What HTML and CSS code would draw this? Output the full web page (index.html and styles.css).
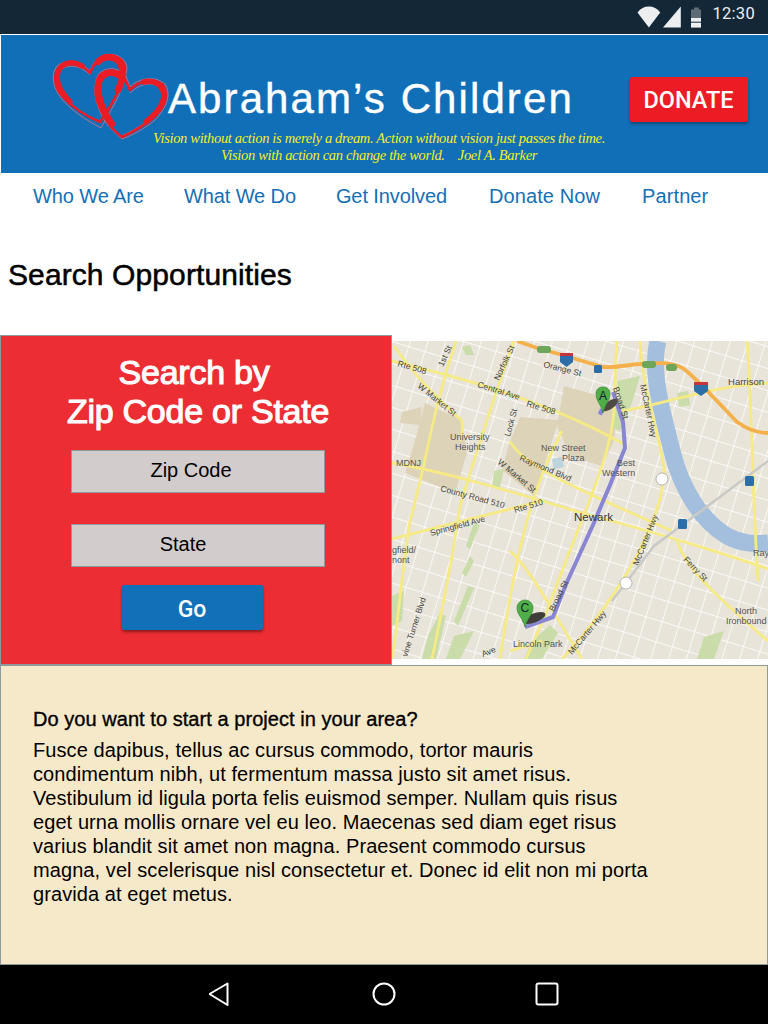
FILE: index.html
```html
<!DOCTYPE html>
<html lang="en">
<head>
<meta charset="utf-8">
<title>Search Opportunities</title>
<link rel="stylesheet" href="styles.css">
</head>
<body>
<div class="status">
  <svg class="st-wifi" width="24" height="22" viewBox="0 0 24 22"><path d="M0.500 6.500C3.500 2.500 7.500 0.500 12 0.500S20.500 2.500 23.500 6.500L12 21.500Z" fill="#eceeef"/></svg>
  <svg class="st-signal" width="18" height="22" viewBox="0 0 18 22"><path d="M18 0.500V21.500H0Z" fill="#eceeef"/></svg>
  <svg class="st-batt" width="11" height="21" viewBox="0 0 11 21"><path d="M3 0.500H8V2.500H11V20.500H0V2.500H3Z" fill="#5d6b76"/><path d="M0 11H11V20.500H0Z M0 14.500V16H11V14.500Z" fill="#eceeef" fill-rule="evenodd"/></svg>
  <span class="st-time">12:30</span>
</div>
<header class="head">
  <svg class="logo" width="116" height="92" viewBox="0 0 116 92" fill="none">
    <g stroke="#d9758a" stroke-width=".8" stroke-linejoin="round">
      <path d="M38 19C29 9 13 7 5 14C-1 22 0 34 9 46C20 59 34 68 49 76C58 60 72 38 75 17C75 6 63 0 52 3C45 6 40 12 38 19Z"/>
      <path d="M78 35C88 25 104 24 113 32C119 42 116 54 103 68C92 77 81 83 70 87C62 80 54 72 50 64C43 50 40 36 46 23C52 15 66 14 74 24Z"/>
      <path d="M38 23C29 13 15 12 8 18C2 27 4 36 12 45C22 56 36 64 49 71"/>
      <path d="M78 41C88 31 102 29 110 36C114 44 112 54 100 65C90 73 81 79 71 83"/>
    </g>
    <g stroke="#ec1c24" stroke-linejoin="round" stroke-linecap="round">
      <path d="M38 21C31 12 15 8 7 15C1 23 2 35 11 45C21 56 34 64 48 70C57 58 70 36 73 17C73 7 62 1 52 4C45 7 41 13 38 21Z" stroke-width="2.600"/>
      <path d="M78 38C87 28 103 26 111 33C117 42 114 54 101 66C91 74 81 80 70 85C60 78 55 70 51 62C44 50 41 36 47 24C53 17 66 17 72 25Z" stroke-width="2.600"/>
      <path d="M30 14C20 8 9 11 6 20C3 30 8 39 18 50" stroke-width="5.500"/>
      <path d="M46 10C52 3 63 4 68 11C72 18 71 28 66 38" stroke-width="6.500"/>
      <path d="M68 24C60 18 51 20 47 30C44 42 50 58 60 72" stroke-width="6.500"/>
      <path d="M92 30C102 27 111 33 112 43C112 53 105 61 94 70" stroke-width="5.500"/>
    </g>
  </svg>
  <div class="brand">
    <h1 class="brand-name">Abraham’s Children</h1>
    <p class="brand-tag">Vision without action is merely a dream. Action without vision just passes the time.<br>Vision with action can change the world. &nbsp;&nbsp; Joel A. Barker</p>
  </div>
  <a class="donate">DONATE</a>
</header>
<nav class="nav">
  <a>Who We Are</a><a>What We Do</a><a>Get Involved</a><a class="nav-wide">Donate Now</a><a class="nav-wide">Partner</a>
</nav>
<h2 class="title">Search Opportunities</h2>
<section class="search">
  <div class="panel">
    <h3 class="panel-head"><span class="panel-head-first">Search by</span><br>Zip Code or State</h3>
    <div class="field field-zip">Zip Code</div>
    <div class="field field-state">State</div>
    <a class="go">Go</a>
  </div>
  <div class="map">
    <svg width="376" height="318" viewBox="0 0 376 318">
      <defs>
        <pattern id="streets" width="17" height="21" patternUnits="userSpaceOnUse" patternTransform="rotate(17)">
          <path d="M0 0H17M0 0V21" stroke="#fff" stroke-width="1.500"/>
        </pattern>
      </defs>
      <rect width="376" height="318" fill="#e8e4da"/>
      <rect width="376" height="318" fill="url(#streets)"/>
      <g fill="#ddd3b8">
        <path d="M33 62L70 79L75 112L63 152L13 132L25 92Z"/>
        <path d="M10 71L30 66L28 84L8 82Z"/>
        <path d="M128 76L167 79L157 109L143 156L110 129L117 103Z"/>
        <path d="M172 45L226 60L222 100L210 125L178 115L165 85Z"/>
      </g>
      <g fill="#c9dca9">
        <path d="M225 40L248 35L240 62L228 90L218 85L228 60Z"/>
        <path d="M70 6L78 4L82 14L74 14Z"/>
        <path d="M36 295L48 272L54 275L44 318H30Z"/>
        <path d="M62 295L82 290L68 318H54Z"/>
        <path d="M140 300L158 284L166 292L150 318H132Z"/>
        <path d="M312 296L332 290L322 318H305Z"/>
        <path d="M74 205L82 182L88 184L78 208Z"/>
        <path d="M102 130L112 128L108 146L100 146Z"/>
        <path d="M70 232L78 215L82 220L74 236Z"/>
        <path d="M0 255L12 250L10 280L0 285Z"/>
        <path d="M62 280L76 245L82 247L66 285Z"/>
        <path d="M285 52L296 50L298 64L287 66Z"/>
      </g>
      <path d="M160 118L170 116L172 126L162 128Z" fill="#bcd4dc"/>
      <path d="M266 0C258 30 270 70 280 110C290 150 310 180 335 195C350 203 362 203 376 202" fill="none" stroke="#a3bfdd" stroke-width="17"/>
      <g fill="none" stroke="#f6ea85" stroke-width="2.800">
        <path d="M0 20C50 32 150 56 235 105"/>
        <path d="M0 122C40 128 120 150 190 172C260 190 340 215 376 228"/>
        <path d="M0 198C50 185 110 170 150 160"/>
        <path d="M64 0C40 70 35 120 18 180C10 230 5 290 0 318"/>
        <path d="M122 0C100 60 85 110 68 165C60 220 50 270 40 318"/>
        <path d="M2 5C30 45 55 65 70 80C72 90 68 100 68 100"/>
        <path d="M118 100C130 125 190 150 280 190"/>
        <path d="M225 0C222 30 225 60 220 85C215 125 180 200 155 270L134 318"/>
        <path d="M248 0C250 50 270 100 272 130C270 190 215 270 170 318"/>
        <path d="M230 70C275 62 320 45 376 42"/>
        <path d="M118 210C140 230 160 270 190 318"/>
        <path d="M285 200C295 230 330 260 376 300"/>
        <path d="M355 0C360 60 360 150 366 240"/>
        <path d="M118 310L150 300"/>
        <path d="M170 90C150 130 130 170 108 318"/>
      </g>
      <path d="M125 0L145 7C165 12 190 20 211 26C225 27 240 23 248 23C265 22 280 20 292 28C305 38 320 55 345 81C355 88 365 92 376 92" fill="none" stroke="#f4b04a" stroke-width="3.800"/>
      <path d="M376 120L262 205L220 260" fill="none" stroke="#c9c9c6" stroke-width="2.500"/>
      <g fill="none" stroke="#8886d2" stroke-width="4" stroke-linejoin="round">
        <path d="M221 51L231 81L233 107L218 144L201 184L175 241L161 276L133 286"/>
        <path d="M207 70L211 72" stroke-width="5.500"/>
      </g>
      <ellipse cx="218" cy="64" rx="9" ry="4" fill="#4e4a43" transform="rotate(-35 218 64)"/>
      <ellipse cx="142" cy="277" rx="12" ry="4.500" fill="#3f3e39" transform="rotate(-20 142 277)"/>
      <path d="M211 72C209 63 204 60 204 53C204 48 207 46 211 46C215 46 218 48 218 53C218 60 213 63 211 72Z" fill="#4fae48" stroke="#34812f" stroke-width=".6"/>
      <path d="M133 286C131 277 125 274 125 267C125 262 129 259 133 259C137 259 141 262 141 267C141 274 135 277 133 286Z" fill="#4fae48" stroke="#34812f" stroke-width=".6"/>
      <g class="mk">
        <text x="207" y="59">A</text>
        <text x="128.500" y="271">C</text>
      </g>
      <g class="shield-blue">
        <path d="M168 13H181V21L174.500 26L168 21Z"/>
        <path d="M302 42H316V50L309 55L302 50Z"/>
        <rect x="202" y="24" width="8" height="8" rx="1.500"/>
        <rect x="353" y="135" width="9" height="10" rx="1.500"/>
        <rect x="286" y="178" width="9" height="10" rx="1.500"/>
      </g>
      <g class="shield-red">
        <rect x="168" y="12" width="13" height="3"/>
        <rect x="302" y="41" width="14" height="3"/>
      </g>
      <g fill="#6fa55a">
        <rect x="145" y="5" width="14" height="7" rx="3"/>
        <rect x="250" y="20" width="14" height="7" rx="3"/>
        <rect x="274" y="23" width="11" height="7" rx="3"/>
      </g>
      <g fill="#fff" stroke="#777" stroke-width=".5">
        <circle cx="270" cy="138" r="6"/>
        <circle cx="234" cy="242" r="6"/>
      </g>
      <g class="lb">
        <text x="5" y="25" transform="rotate(16 5 25)">Rte 508</text>
        <text x="51" y="26" transform="rotate(-65 51 26)">1st St</text>
        <text x="25" y="46" transform="rotate(39 25 46)">W Market St</text>
        <text x="107" y="40" transform="rotate(-65 107 40)">Norfolk St</text>
        <text x="151" y="26" transform="rotate(14 151 26)">Orange St</text>
        <text x="85" y="46" transform="rotate(17 85 46)">Central Ave</text>
        <text x="134" y="65" transform="rotate(17 134 65)">Rte 508</text>
        <text x="118" y="96" transform="rotate(-75 118 96)">Lock St</text>
        <text x="221" y="47" transform="rotate(72 221 47)">Broad St</text>
        <text x="248" y="44" transform="rotate(78 248 44)">McCarter Hwy</text>
        <text x="105" y="122" transform="rotate(40 105 122)">W Market St</text>
        <text x="127" y="119" transform="rotate(23 127 119)">Raymond Blvd</text>
        <text x="48" y="150" transform="rotate(15 48 150)">County Road 510</text>
        <text x="123" y="172" transform="rotate(-17 123 172)">Rte 510</text>
        <text x="39" y="195" transform="rotate(-15 39 195)">Springfield Ave</text>
        <text x="246" y="225" transform="rotate(-68 246 225)">McCarter Hwy</text>
        <text x="291" y="219" transform="rotate(46 291 219)">Ferry St</text>
        <text x="15" y="316" transform="rotate(-72 15 316)">vine Turner Blvd</text>
        <text x="162" y="271" transform="rotate(-64 162 271)">Broad St</text>
        <text x="180" y="314" transform="rotate(-50 180 314)">McCarter Hwy</text>
        <text x="91" y="316" transform="rotate(-22 91 316)">Ave</text>
      </g>
      <g class="lb-place">
        <text x="58" y="99">University</text>
        <text x="63" y="109">Heights</text>
        <text x="149" y="110">New Street</text>
        <text x="170" y="120">Plaza</text>
        <text x="225" y="125">Best</text>
        <text x="210" y="135">Western</text>
        <text x="4" y="125">MDNJ</text>
        <text x="0" y="212">gfield/</text>
        <text x="0" y="222">nont</text>
        <text x="354" y="44" class="lb-big-s">Harrison</text>
        <text x="343" y="273">North</text>
        <text x="334" y="283">Ironbound</text>
        <text x="121" y="306">Lincoln Park</text>
        <text x="361" y="215">Ray</text>
        <text x="182" y="180" class="lb-city">Newark</text>
      </g>
    </svg>
  </div>
</section>
<section class="info">
  <h4 class="info-head">Do you want to start a project in your area?</h4>
  <p class="info-text">Fusce dapibus, tellus ac cursus commodo, tortor mauris<br>condimentum nibh, ut fermentum massa justo sit amet risus.<br>Vestibulum id ligula porta felis euismod semper. Nullam quis risus<br>eget urna mollis ornare vel eu leo. Maecenas sed diam eget risus<br>varius blandit sit amet non magna. Praesent commodo cursus<br>magna, vel scelerisque nisl consectetur et. Donec id elit non mi porta<br>gravida at eget metus.</p>
</section>
<footer class="sysnav">
  <svg width="24" height="24" viewBox="0 0 24 24" fill="none" stroke="#fff" stroke-width="2" stroke-linejoin="round"><path d="M0.500 12L18.500 1.500V23Z"/></svg>
  <svg width="24" height="24" viewBox="0 0 24 24" fill="none" stroke="#fff" stroke-width="2"><circle cx="12" cy="12" r="10.500"/></svg>
  <svg width="24" height="24" viewBox="0 0 24 24" fill="none" stroke="#fff" stroke-width="2"><rect x="1.500" y="1.500" width="21" height="21" rx="2"/></svg>
</footer>
</body>
</html>
```
FILE: styles.css
```css
* { box-sizing: border-box; }
html, body { margin: 0; padding: 0; }
body {
  width: 768px;
  height: 1024px;
  overflow: hidden;
  background: #fff;
  font-family: "Liberation Sans", Arial, sans-serif;
  color: #000;
  display: flex;
  flex-direction: column;
}
h1, h2, h3, h4, p { margin: 0; font-weight: 400; }

.status {
  height: 34px;
  flex: none;
  background: #132736;
  display: flex;
  align-items: flex-start;
  padding: 6px 13px 0 637px;
}
.st-signal { margin-left: 2px; }
.st-batt { margin: 1px 0 0 10px; }
.st-time {
  margin-left: 11px;
  font: 400 16.500px/16px Roboto, sans-serif;
  color: #eceeef;
  letter-spacing: .3px;
}

.head {
  margin: 1px 0 0 1px;
  height: 138px;
  flex: none;
  background: #116fb8;
  display: flex;
  padding: 17px 21px 0 51px;
}
.logo { flex: none; overflow: visible; }
.brand { margin-left: -15px; width: 452px; flex: none; }
.brand-name {
  margin-left: 15px;
  font-size: 42px;
  line-height: 48px;
  letter-spacing: 2.100px;
  color: #fff;
  -webkit-text-stroke: .4px #fff;
  white-space: nowrap;
  margin-top: 23px;
}
.brand-tag {
  margin-top: 7px;
  font: italic 400 14.500px/17px "Liberation Serif", serif;
  letter-spacing: -.33px;
  color: #f5ee1d;
  text-align: center;
  white-space: nowrap;
}
.donate {
  margin: 25px 0 0 25px;
  width: 118px;
  height: 45px;
  flex: none;
  border-radius: 2px;
  background: #ec1c24;
  color: #fff;
  font: 500 23.500px/47px Roboto, sans-serif;
  text-align: center;
  padding-right: 1px;
  box-shadow: 0 2px 3px rgba(0, 0, 0, .35);
}

.nav {
  flex: none;
  height: 47px;
  display: flex;
  gap: 40px;
  padding: 11px 0 0 33px;
}
.nav a {
  color: #1470b6;
  font-size: 20px;
  line-height: 24px;
  letter-spacing: -.1px;
  white-space: nowrap;
}
.nav .nav-wide { margin-left: 2px; letter-spacing: .1px; }

.title {
  flex: none;
  height: 115px;
  padding: 37px 0 0 8px;
  font-size: 30px;
  line-height: 36px;
  letter-spacing: .1px;
  -webkit-text-stroke: .5px #000;
}

.search {
  flex: none;
  height: 330px;
  display: flex;
}
.panel {
  width: 392px;
  flex: none;
  background: #ec2d33;
  border: 1px solid #8f9a9e;
  display: flex;
  flex-direction: column;
  align-items: center;
  padding-top: 17px;
}
.panel-head {
  color: #fff;
  font-size: 34px;
  line-height: 39px;
  letter-spacing: -.25px;
  -webkit-text-stroke: 1.100px #fff;
  text-align: center;
  width: 390px;
  padding-left: 4px;
}
.panel-head-first { display: inline-block; padding-right: 8px; }
.field {
  width: 254px;
  height: 43px;
  flex: none;
  margin: 19px 0 0 4px;
  background: #d2cccc;
  border: 1px solid #8f9a9e;
  font-size: 20px;
  line-height: 39px;
  text-align: center;
}
.field-zip { padding-right: 14px; }
.field-state { margin-top: 31px; padding-right: 30px; }
.go {
  margin: 18px 0 0 -8px;
  width: 141px;
  height: 45px;
  flex: none;
  border-radius: 2px;
  background: #1170b8;
  color: #fff;
  font: 500 23px/49px Roboto, sans-serif;
  text-align: center;
  box-shadow: 0 2px 3px rgba(0, 0, 0, .4);
}
.map {
  flex: 1;
  padding-top: 6px;
}
.map svg { display: block; }
.mk text { font: 400 12px "Liberation Sans", sans-serif; fill: #123; }
.shield-blue { fill: #2c6ea8; }
.shield-red { fill: #c8343c; }
.lb text { font: 400 8.500px "Liberation Sans", sans-serif; fill: #45453c; }
.lb-place text { font: 400 9px "Liberation Sans", sans-serif; fill: #555; }
.lb-place .lb-big-s { font-size: 9.500px; text-anchor: middle; fill: #444; }
.lb-place .lb-city { font-size: 11.500px; fill: #333; }

.info {
  flex: none;
  height: 300px;
  background: #f6e9c9;
  border: 1px solid #8f9a9e;
  padding: 42px 0 0 32px;
}
.info-head {
  font-size: 20px;
  line-height: 22px;
  letter-spacing: .05px;
  -webkit-text-stroke: .35px #000;
}
.info-text {
  margin-top: 8px;
  font-size: 20px;
  line-height: 24px;
  letter-spacing: .08px;
  white-space: nowrap;
}

.sysnav {
  flex: 1;
  background: #000;
  display: flex;
  justify-content: center;
  gap: 139px;
  padding-top: 17px;
  align-items: flex-start;
}
```
